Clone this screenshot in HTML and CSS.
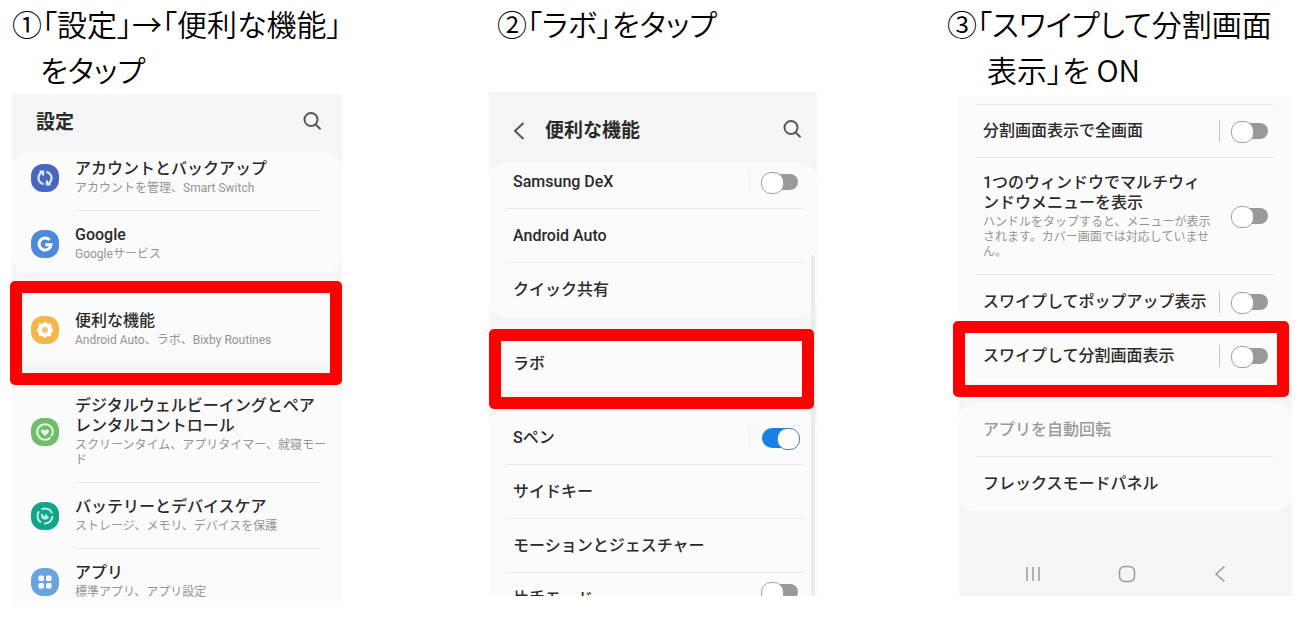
FILE: index.html
```html
<!DOCTYPE html>
<html lang="ja">
<head>
    <meta charset="UTF-8">
    <meta name="viewport" content="width=device-width, initial-scale=1.0">
    <title>分割画面表示の設定</title>
    <link rel="stylesheet" href="styles.css">
</head>
<body>
    <main class="steps">

        <section class="step">
            <h2 class="step-title">①「設定」→「便利な機能」<br>をタップ</h2>
            <div class="phone">
                <header class="bar">
                    <h3>設定</h3>
                    <button type="button" class="icon-btn search" aria-label="検索">
                        <svg viewBox="0 0 20 20"><circle cx="9" cy="8.5" r="6.5"/><path d="M13.5 13.2l5 5"/></svg>
                    </button>
                </header>
                <div class="card card-top">
                    <a href="#" class="item">
                        <svg class="app" viewBox="0 0 28 28"><rect width="28" height="28" rx="12" fill="#4a66c0"/><g fill="none" stroke="#d9efff" stroke-width="2.2"><path d="M12.5 20.3C9 19 7.500 16.500 7.500 14c0-2.500 1.500-5 4-6M8.500 7.500h3.600v4"/><path d="M15.500 7.700c3.500 1.300 5 3.800 5 6.300 0 2.500-1.500 5-4 6M19.500 20.500h-3.600v-4"/></g></svg>
                        <span class="item-text">
                            <span class="name">アカウントとバックアップ</span>
                            <span class="sub">アカウントを管理、Smart Switch</span>
                        </span>
                    </a>
                    <a href="#" class="item">
                        <svg class="app" viewBox="0 0 28 28"><rect width="28" height="28" rx="12" fill="#4d8add"/><path d="M18.500 10A6 6 0 1 0 20 14.800H14.200" fill="none" stroke="#fff" stroke-width="3"/></svg>
                        <span class="item-text">
                            <span class="name">Google</span>
                            <span class="sub">Googleサービス</span>
                        </span>
                    </a>
                </div>
                <div class="card card-feature">
                    <a href="#" class="item">
                        <svg class="app" viewBox="0 0 28 28"><rect width="28" height="28" rx="12" fill="#f5b54a"/><path d="M14 5.500l2.600 2.300 3.500-.3.300 3.500 2.200 3-2.200 2.800-.3 3.500-3.500-.2L14 22.500l-2.600-2.400-3.500.2-.3-3.500L5.400 14l2.200-3 .3-3.500 3.500.3z" fill="#fff"/><circle cx="14" cy="14" r="3" fill="#f5c46c"/></svg>
                        <span class="item-text">
                            <span class="name">便利な機能</span>
                            <span class="sub">Android Auto、ラボ、Bixby Routines</span>
                        </span>
                    </a>
                    <div class="mark mark-feature"></div>
                </div>
                <div class="card card-bottom">
                    <a href="#" class="item">
                        <svg class="app" viewBox="0 0 28 28"><rect width="28" height="28" rx="12" fill="#6fbd68"/><path d="M19.500 19.500A7.800 7.800 0 1 1 21.800 14c0 1.800-.6 3-1.800 4" fill="none" stroke="#e6f8e0" stroke-width="2"/><path d="M14 18.200l-3.600-3.600c-1.500-1.900.8-4.600 3.600-2.200 2.800-2.400 5.100.3 3.600 2.200z" fill="#e6f8e0"/></svg>
                        <span class="item-text">
                            <span class="name">デジタルウェルビーイングとペア<br>レンタルコントロール</span>
                            <span class="sub">スクリーンタイム、アプリタイマー、就寝モー<br>ド</span>
                        </span>
                    </a>
                    <a href="#" class="item">
                        <svg class="app" viewBox="0 0 28 28"><rect width="28" height="28" rx="12" fill="#12a58c"/><circle cx="14" cy="14" r="7.500" fill="none" stroke="#b9f0e2" stroke-width="2" stroke-dasharray="12.700 3"/><path d="M10 11l3.500 3.500 1-3 3.500 4-2 2h-4l-2-2.500z" fill="#b9f0e2"/></svg>
                        <span class="item-text">
                            <span class="name">バッテリーとデバイスケア</span>
                            <span class="sub">ストレージ、メモリ、デバイスを保護</span>
                        </span>
                    </a>
                    <a href="#" class="item">
                        <svg class="app" viewBox="0 0 28 28"><rect width="28" height="28" rx="12" fill="#69a3e0"/><g fill="#fff"><rect x="7.500" y="7.500" width="5.500" height="5.500" rx="1.500"/><rect x="15" y="7.500" width="5.500" height="5.500" rx="1.500"/><rect x="7.500" y="15" width="5.500" height="5.500" rx="1.500"/><rect x="15" y="15" width="5.500" height="5.500" rx="1.500"/></g></svg>
                        <span class="item-text">
                            <span class="name">アプリ</span>
                            <span class="sub">標準アプリ、アプリ設定</span>
                        </span>
                    </a>
                </div>
            </div>
        </section>

        <section class="step step-labs">
            <h2 class="step-title">②「ラボ」をタップ</h2>
            <div class="phone">
                <header class="bar">
                    <button type="button" class="icon-btn back" aria-label="戻る">
                        <svg viewBox="0 0 12 18"><path d="M10.500 1L2 9l8.500 8"/></svg>
                    </button>
                    <h3>便利な機能</h3>
                    <button type="button" class="icon-btn search" aria-label="検索">
                        <svg viewBox="0 0 20 20"><circle cx="9" cy="8.5" r="6.5"/><path d="M13.5 13.2l5 5"/></svg>
                    </button>
                </header>
                <div class="card card-top">
                    <div class="row row-cut-top">
                        <label for="dex" class="name">Samsung DeX</label>
                        <span class="sep sep-faint"></span>
                        <input type="checkbox" id="dex" class="toggle">
                    </div>
                    <a href="#" class="row"><span class="name">Android Auto</span></a>
                    <a href="#" class="row"><span class="name">クイック共有</span></a>
                </div>
                <div class="card">
                    <a href="#" class="row"><span class="name">ラボ</span></a>
                    <div class="mark mark-labs"></div>
                </div>
                <div class="card card-bottom">
                    <div class="row">
                        <label for="spen" class="name">Sペン</label>
                        <span class="sep sep-faint"></span>
                        <input type="checkbox" id="spen" class="toggle" checked>
                    </div>
                    <a href="#" class="row"><span class="name">サイドキー</span></a>
                    <a href="#" class="row"><span class="name">モーションとジェスチャー</span></a>
                    <div class="row row-cut-bottom">
                        <label for="onehand" class="name">片手モード</label>
                        <input type="checkbox" id="onehand" class="toggle">
                    </div>
                </div>
                <div class="scrollbar"></div>
            </div>
        </section>

        <section class="step step-split">
            <h2 class="step-title">③「スワイプして分割画面<br>表示」を ON</h2>
            <div class="phone">
                <div class="card card-list">
                    <div class="row">
                        <label for="full" class="name">分割画面表示で全画面</label>
                        <span class="sep"></span>
                        <input type="checkbox" id="full" class="toggle">
                    </div>
                    <div class="row row-tall">
                        <label for="multi" class="item-text">
                            <span class="name">1つのウィンドウでマルチウィ<br>ンドウメニューを表示</span>
                            <span class="sub">ハンドルをタップすると、メニューが表示<br>されます。カバー画面では対応していませ<br>ん。</span>
                        </label>
                        <input type="checkbox" id="multi" class="toggle">
                    </div>
                    <div class="row">
                        <label for="popup" class="name">スワイプしてポップアップ表示</label>
                        <span class="sep"></span>
                        <input type="checkbox" id="popup" class="toggle">
                    </div>
                    <div class="row">
                        <label for="split" class="name">スワイプして分割画面表示</label>
                        <span class="sep"></span>
                        <input type="checkbox" id="split" class="toggle">
                    </div>
                    <div class="mark mark-split"></div>
                </div>
                <div class="card">
                    <div class="row disabled"><span class="name">アプリを自動回転</span></div>
                    <a href="#" class="row"><span class="name">フレックスモードパネル</span></a>
                </div>
                <nav class="nav">
                    <button type="button" class="icon-btn" aria-label="履歴">
                        <svg viewBox="0 0 18 18"><path d="M3 2v14M9 2v14M15 2v14"/></svg>
                    </button>
                    <button type="button" class="icon-btn" aria-label="ホーム">
                        <svg viewBox="0 0 18 18"><rect x="1.500" y="1.500" width="15" height="15" rx="5"/></svg>
                    </button>
                    <button type="button" class="icon-btn" aria-label="戻る">
                        <svg viewBox="0 0 18 18"><path d="M13.500 1.500L5 9l8.500 7.500"/></svg>
                    </button>
                </nav>
            </div>
        </section>

    </main>
</body>
</html>
```

FILE: styles.css
```css
* {
    margin: 0;
    padding: 0;
    box-sizing: border-box;
}
body {
    background: #fff;
    color: #2a2a2a;
    font-family: Roboto, "Noto Sans CJK JP", sans-serif;
    font-size: 16px;
    line-height: 20px;
}
a {
    color: inherit;
    text-decoration: none;
}
.steps {
    display: grid;
    grid-template-columns: 477fr 458fr 345fr;
    align-items: start;
    padding: 0 12px;
}
.step-title {
    min-height: 92px;
    padding-left: 28px;
    text-indent: -28px;
    color: #000;
    font-family: "Noto Sans CJK JP", sans-serif;
    font-size: 30px;
    font-weight: 350;
    font-feature-settings: "palt";
    line-height: 46px;
    white-space: nowrap;
}
.step-labs .step-title {
    padding-left: 36px;
}
.step-split .step-title {
    padding-left: 40px;
    text-indent: -40px;
}
.phone {
    position: relative;
    max-width: 330px;
    margin-top: 2px;
    background: #f5f5f5;
}
.step-labs .phone {
    max-width: 328px;
    margin-top: 0;
}
.step-split .phone {
    max-width: none;
    margin: 4px 0 0 12px;
}

/* title bar */
.bar {
    display: flex;
    align-items: center;
    height: 58px;
    padding: 0 20px 0 24px;
}
.step-labs .bar {
    height: 71px;
    padding: 6px 15px 0 24px;
}
.bar h3 {
    font-size: 19px;
    font-weight: 700;
}
.icon-btn {
    display: flex;
    border: none;
    background: none;
    cursor: pointer;
}
.icon-btn svg {
    width: 18px;
    height: 18px;
    fill: none;
    stroke: #555;
    stroke-width: 2;
}
.bar .search {
    margin: 0 0 4px auto;
}
.bar .search svg {
    width: 20px;
    height: 20px;
}
.back {
    margin-right: 20px;
}
.bar .back svg {
    width: 12px;
}

/* cards */
.card {
    position: relative;
    margin-bottom: 20px;
    border-radius: 16px;
    background: #fbfbfb;
}
.card-bottom {
    margin-bottom: 0;
    border-radius: 16px 16px 0 0;
}
.card-list {
    padding-top: 8px;
    border-radius: 0 0 16px 16px;
}
.name {
    display: block;
    font-weight: 500;
}
.sub {
    display: block;
    margin-top: 2px;
    color: #949494;
    font-size: 12px;
    line-height: 15px;
    white-space: nowrap;
}

/* settings entries with an app icon */
.item {
    display: flex;
    align-items: center;
    padding: 14px 10px 14px 19px;
}
.app {
    flex: none;
    width: 28px;
    height: 28px;
    margin-right: 16px;
}
.item + .item {
    position: relative;
    padding-top: 15px;
}
.item + .item::before {
    content: "";
    position: absolute;
    top: 0;
    left: 63px;
    right: 22px;
    border-top: 1px solid #e8e8e8;
}
.card-top .item:first-child {
    padding-top: 7px;
}
.card-top .item:last-child {
    padding-bottom: 11px;
}
.card-feature .item {
    padding-top: 18px;
}
.card-bottom .item:last-child {
    padding-bottom: 2px;
}

/* plain rows */
.row {
    display: flex;
    align-items: center;
    min-height: 54px;
    margin: 0 13px 0 17px;
    padding: 0 6px 0 7px;
    border-bottom: 1px solid #e8e8e8;
}
.step-split .row {
    margin-right: 18px;
}
.row:last-child, .row:has(+ .mark) {
    border-bottom-color: transparent;
}
.card-list .row:first-child {
    border-top: 1px solid #e8e8e8;
}
.row-tall {
    min-height: 117px;
}
.row-cut-top {
    min-height: 46px;
    padding-bottom: 8px;
}
.row-cut-bottom {
    height: 23px;
    min-height: 0;
    padding-top: 16px;
    align-items: flex-start;
    border-bottom: none;
    overflow: hidden;
}
.disabled {
    color: #9a9a9a;
}
.sep {
    height: 22px;
    margin: 0 12px 0 auto;
    border-left: 1px solid #c4c4c4;
}
.sep-faint {
    border-color: #efefef;
}

/* switches */
.toggle {
    appearance: none;
    flex: none;
    position: relative;
    width: 36px;
    height: 16px;
    border-radius: 8px;
    background: #999;
    cursor: pointer;
}
.name + .toggle, .item-text + .toggle {
    margin-left: auto;
}
.toggle::before {
    content: "";
    position: absolute;
    top: -2px;
    left: -1px;
    width: 21px;
    height: 20px;
    border: 1px solid #a0a0a0;
    border-radius: 10px;
    background: #fff;
}
.toggle:checked {
    height: 20px;
    border-radius: 10px;
    background: #1a80e6;
}
.toggle:checked::before {
    top: 0;
    left: 15px;
    border-color: #4c82b4;
}
.row-cut-bottom .toggle {
    margin-top: -5px;
}
.scrollbar {
    position: absolute;
    top: 163px;
    right: 2px;
    bottom: 0;
    width: 4px;
    background: #ececec;
}

/* red frames round the entry to tap */
.mark {
    position: absolute;
    z-index: 1;
    border: 12px solid #f00;
    border-radius: 5px;
    pointer-events: none;
}
.mark-feature {
    inset: -12px 0 -23px -2px;
}
.mark-labs {
    inset: -8px 3px -18px 0;
}
.mark-split {
    inset: auto 3px -14px -6px;
    height: 76px;
}

/* navigation keys */
.nav {
    display: flex;
    justify-content: space-between;
    padding: 34px 63px 13px 65px;
}
.nav svg {
    stroke: #999;
    stroke-width: 1.5;
}
```
